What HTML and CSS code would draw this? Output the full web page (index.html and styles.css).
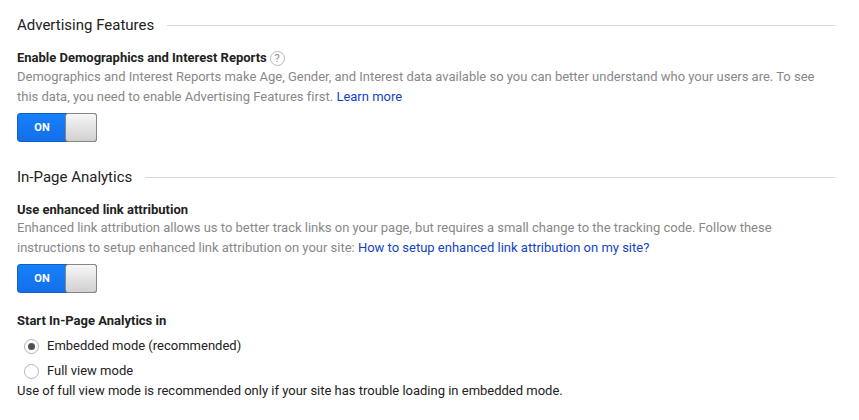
FILE: index.html
```html
<!DOCTYPE html>
<html lang="en"><head><meta charset="utf-8"><title>Property Settings</title><link rel="stylesheet" href="styles.css"></head>
<body>
<main>
<section class="first">
<h2><span>Advertising Features</span></h2>
<h3><span>Enable Demographics and Interest Reports</span><span class="help">?</span></h3>
<p class="desc">Demographics and Interest Reports make Age, Gender, and Interest data available so you can better understand who your users are. To see<br>this data, you need to enable Advertising Features first. <a>Learn more</a></p>
<div class="toggle"><span class="on">ON</span><span class="knob"></span></div>
</section>
<section class="second">
<h2><span>In-Page Analytics</span></h2>
<h3><span>Use enhanced link attribution</span></h3>
<p class="desc">Enhanced link attribution allows us to better track links on your page, but requires a small change to the tracking code. Follow these<br>instructions to setup enhanced link attribution on your site: <a>How to setup enhanced link attribution on my site?</a></p>
<div class="toggle"><span class="on">ON</span><span class="knob"></span></div>
<h3 class="start">Start In-Page Analytics in</h3>
<div class="option"><span class="radio checked"></span><span>Embedded mode (recommended)</span></div>
<div class="option"><span class="radio"></span><span>Full view mode</span></div>
<p class="note">Use of full view mode is recommended only if your site has trouble loading in embedded mode.</p>
</section>
</main>
</body></html>
```
FILE: styles.css
```css
* { box-sizing: border-box; }
body { margin: 0; background: #fff; color: #222; font: 13px/20px Roboto, sans-serif; }
main { padding: 15px 24px 0 17px; }
h2, h3, p { margin: 0; }
h2 { display: flex; align-items: center; height: 20px; font-size: 15px; font-weight: 400; white-space: nowrap; }
h2::after { content: ""; flex: 1; height: 1px; margin-left: 13px; background: #d8d8d8; }
h3 { display: flex; align-items: center; height: 20px; margin-top: 13px; font-size: 13px; font-weight: 700; white-space: nowrap; }
.help { width: 15px; height: 15px; margin-left: 3px; border: 1px solid #b8b8b8; border-radius: 50%; color: #888; font-size: 11px; font-weight: 400; line-height: 14px; text-align: center; }
.desc { margin-top: -1px; color: #888; letter-spacing: -0.006px; white-space: nowrap; }
.second .desc { margin-top: -2px; }
a { color: #1343c4; }
.toggle { display: flex; width: 80px; height: 29px; margin-top: 6px; border: 1px solid #1260c4; border-radius: 3px; background: linear-gradient(#1780fb, #136fe9); }
.on { flex: 1; color: #fff; font-size: 11px; font-weight: 700; line-height: 27px; text-align: center; }
.knob { width: 32px; height: 29px; margin: -1px; border: 1px solid #868686; border-radius: 3px; background: linear-gradient(#f7f7f7, #d0d0d0); }
.second { margin-top: 25px; }
.start { margin-top: 18px; }
.option { display: flex; align-items: center; height: 25px; padding-left: 7px; gap: 8px; }
.start + .option { margin-top: 2px; }
.radio { display: grid; place-items: center; width: 15px; height: 15px; margin-top: 2px; border: 1px solid #b4b4b4; border-radius: 50%; }
.checked::after { content: ""; width: 7px; height: 7px; border-radius: 50%; background: #505050; }
.note { margin-top: -2px; letter-spacing: -0.006px; white-space: nowrap; }
```
